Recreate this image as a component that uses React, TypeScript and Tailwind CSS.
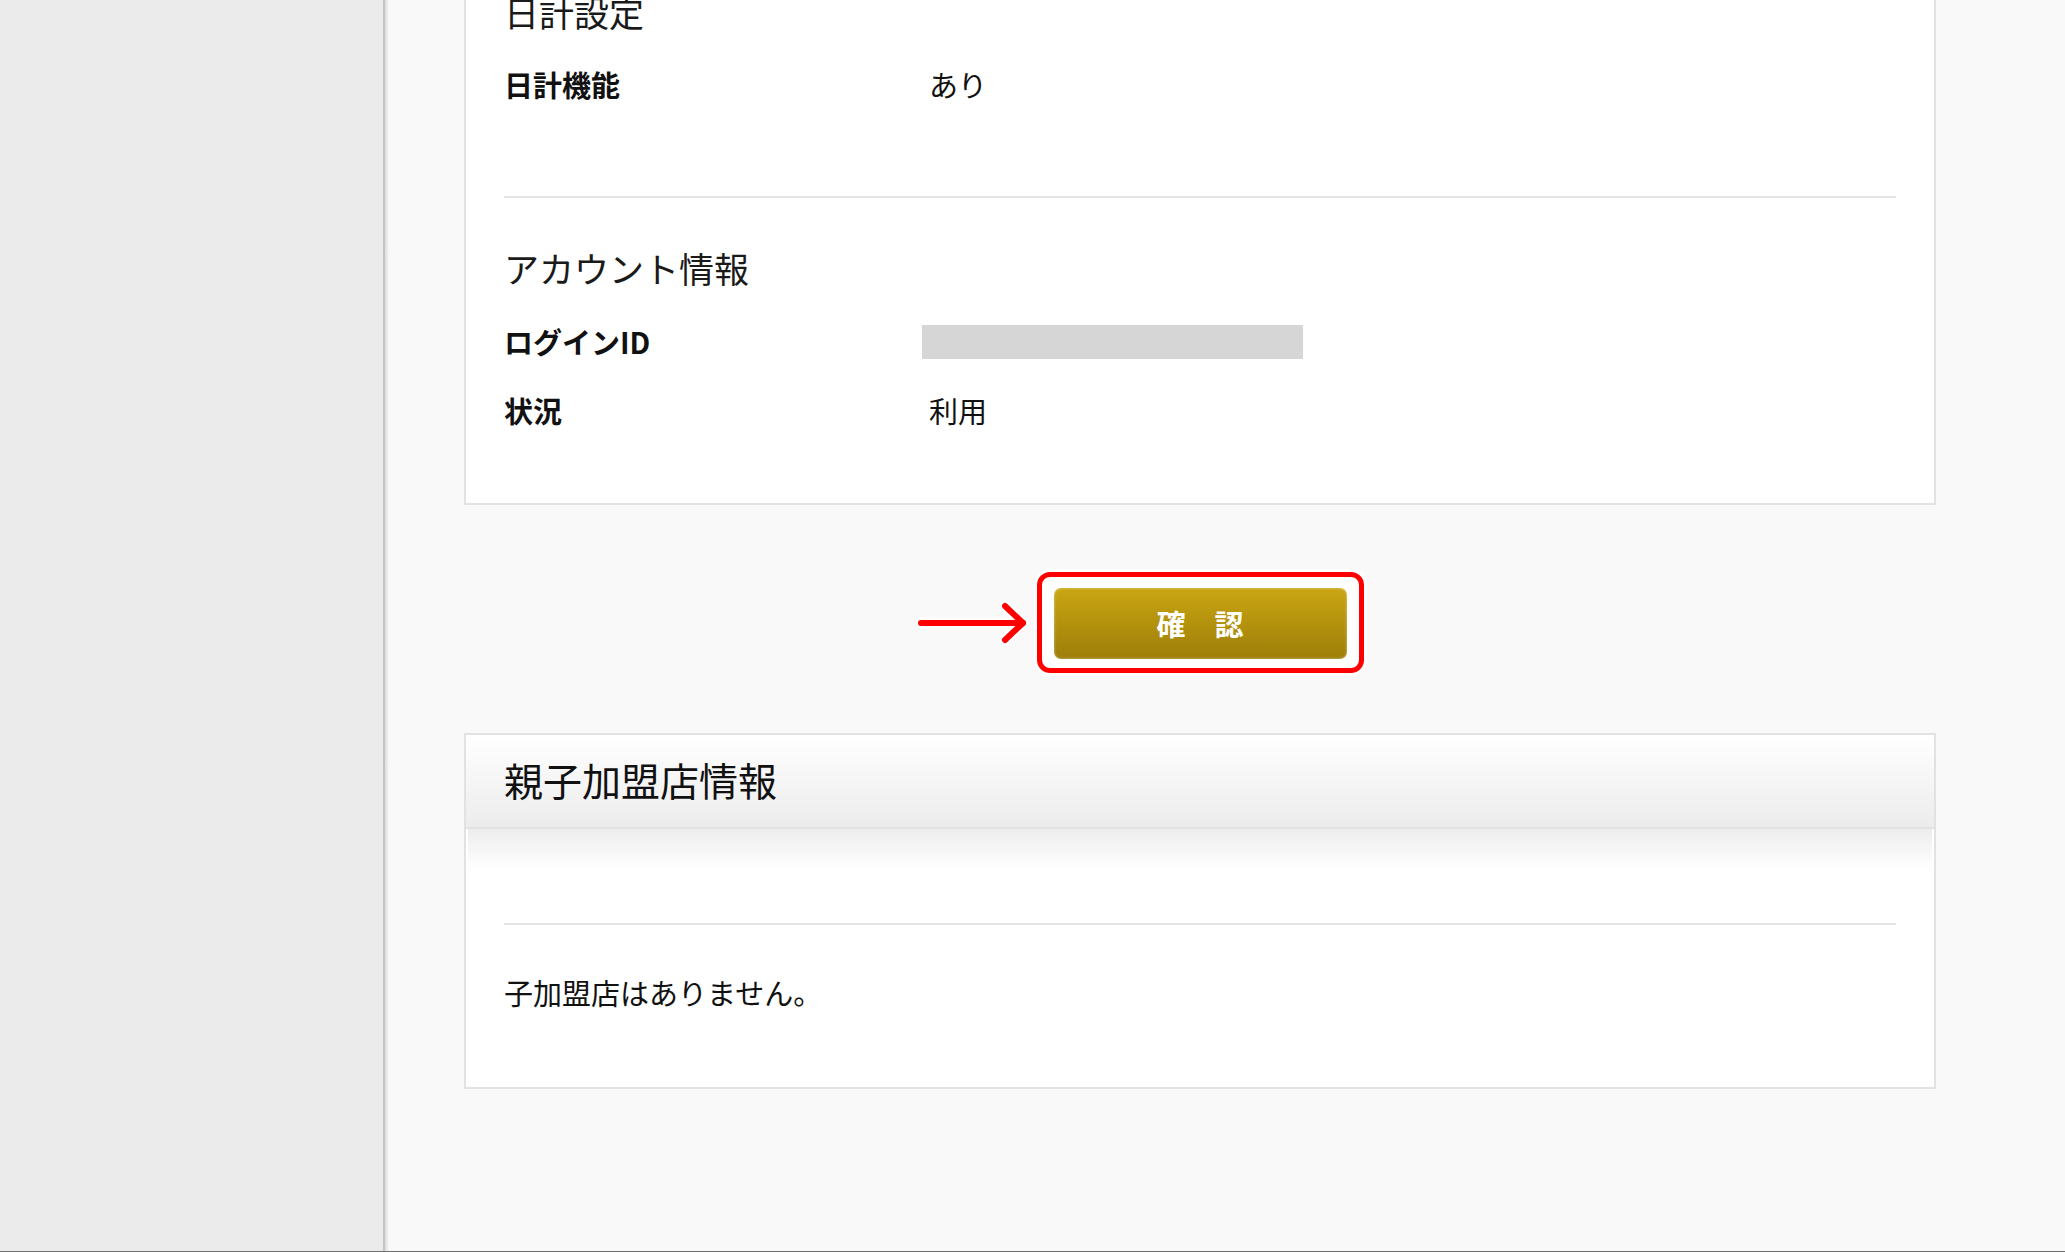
import type { ReactNode } from 'react';

const FONT = { fontFamily: '"Noto Sans CJK JP", "Noto Sans", sans-serif' };

function Row({ label, children, className = '' }: { label: string; children: ReactNode; className?: string }) {
  return (
    <div className={`flex h-[50px] items-center ${className}`}>
      <div className="w-[425px] shrink-0 text-[29px] font-bold text-[#111]">{label}</div>
      <div className="flex-1 text-[29px] text-[#111]">{children}</div>
    </div>
  );
}

// 赤い矢印（注釈）
function Arrow() {
  return (
    <svg width="114" height="44" viewBox="0 0 114 44" className="absolute right-full top-1/2 mr-[6px] -translate-y-1/2">
      <g fill="none" stroke="#ffffff" strokeWidth="11" strokeLinecap="round" strokeLinejoin="round">
        <path d="M4 22 H106" />
        <path d="M88 5 L106 22 L88 39" />
      </g>
      <g fill="none" stroke="#ff0000" strokeWidth="6" strokeLinecap="round" strokeLinejoin="round">
        <path d="M4 22 H106" />
        <path d="M88 5 L106 22 L88 39" />
      </g>
    </svg>
  );
}

export default function App() {
  return (
    <div className="flex h-[1252px] w-full overflow-hidden border-b border-[#6e6e6e] bg-[#f9f9f9]" style={FONT}>
      {/* サイドバー */}
      <div className="w-[383px] shrink-0 bg-[#ebebeb]" />
      <div className="w-[2px] shrink-0 bg-[#c4c4c4]" />
      <div className="w-[4px] shrink-0 bg-gradient-to-r from-[#dcdcdc] to-[#f9f9f9]" />

      <main className="flex-1 pl-[75px]">
        <div className="flex w-[1472px] flex-col">
          {/* 設定カード（上部はスクロール済み） */}
          <section className="-mt-[80px] border-2 border-[#e2e2e2] bg-white px-[38px]">
            <div className="border-b-2 border-[#e3e3e3] pt-[64px] pb-[86px]">
              <h3 className="text-[35px] leading-[51px] text-[#1a1a1a]">日計設定</h3>
              <Row label="日計機能" className="mt-[23px]">あり</Row>
            </div>
            <div className="pt-[44px] pb-[67px]">
              <h3 className="text-[35px] leading-[51px] text-[#1a1a1a]">アカウント情報</h3>
              <Row label="ログインID" className="mt-[24px]">
                <div className="-ml-[7px] h-[34px] w-[381px] bg-[#d6d6d6]" />
              </Row>
              <Row label="状況" className="mt-[19px]">利用</Row>
            </div>
          </section>

          {/* 確認ボタン */}
          <div className="mt-[67px] flex justify-center">
            <div className="relative">
              <Arrow />
              <div className="rounded-[13px] border-[5px] border-[#ff0000] bg-white px-[12px] pt-[11px] pb-[9px] shadow-[0_0_0_3px_#ffffff]">
                <button className="flex h-[71px] w-[293px] items-center justify-center rounded-[7px] bg-gradient-to-b from-[#caa612] to-[#9d7e08] text-[29px] font-bold text-white shadow-[inset_0_0_3px_rgba(255,255,255,0.5)]">
                  確　認
                </button>
              </div>
            </div>
          </div>

          {/* 親子加盟店情報 */}
          <section className="mt-[60px] border-2 border-[#e2e2e2] bg-white">
            <div className="flex h-[94px] items-center border-b-2 border-[#e3e3e3] bg-gradient-to-b from-white to-[#ececec] px-[38px] pb-[3px]">
              <h2 className="text-[39px] text-[#111]">親子加盟店情報</h2>
            </div>
            <div className="mx-[2px] h-[40px] bg-gradient-to-b from-[#ededed] to-white" />
            <div className="px-[38px] pb-[74px]">
              <div className="mt-[54px] border-t-2 border-[#e3e3e3]" />
              <p className="mt-[46px] text-[29px] leading-[42px] text-[#111]">子加盟店はありません。</p>
            </div>
          </section>
        </div>
      </main>
    </div>
  );
}
